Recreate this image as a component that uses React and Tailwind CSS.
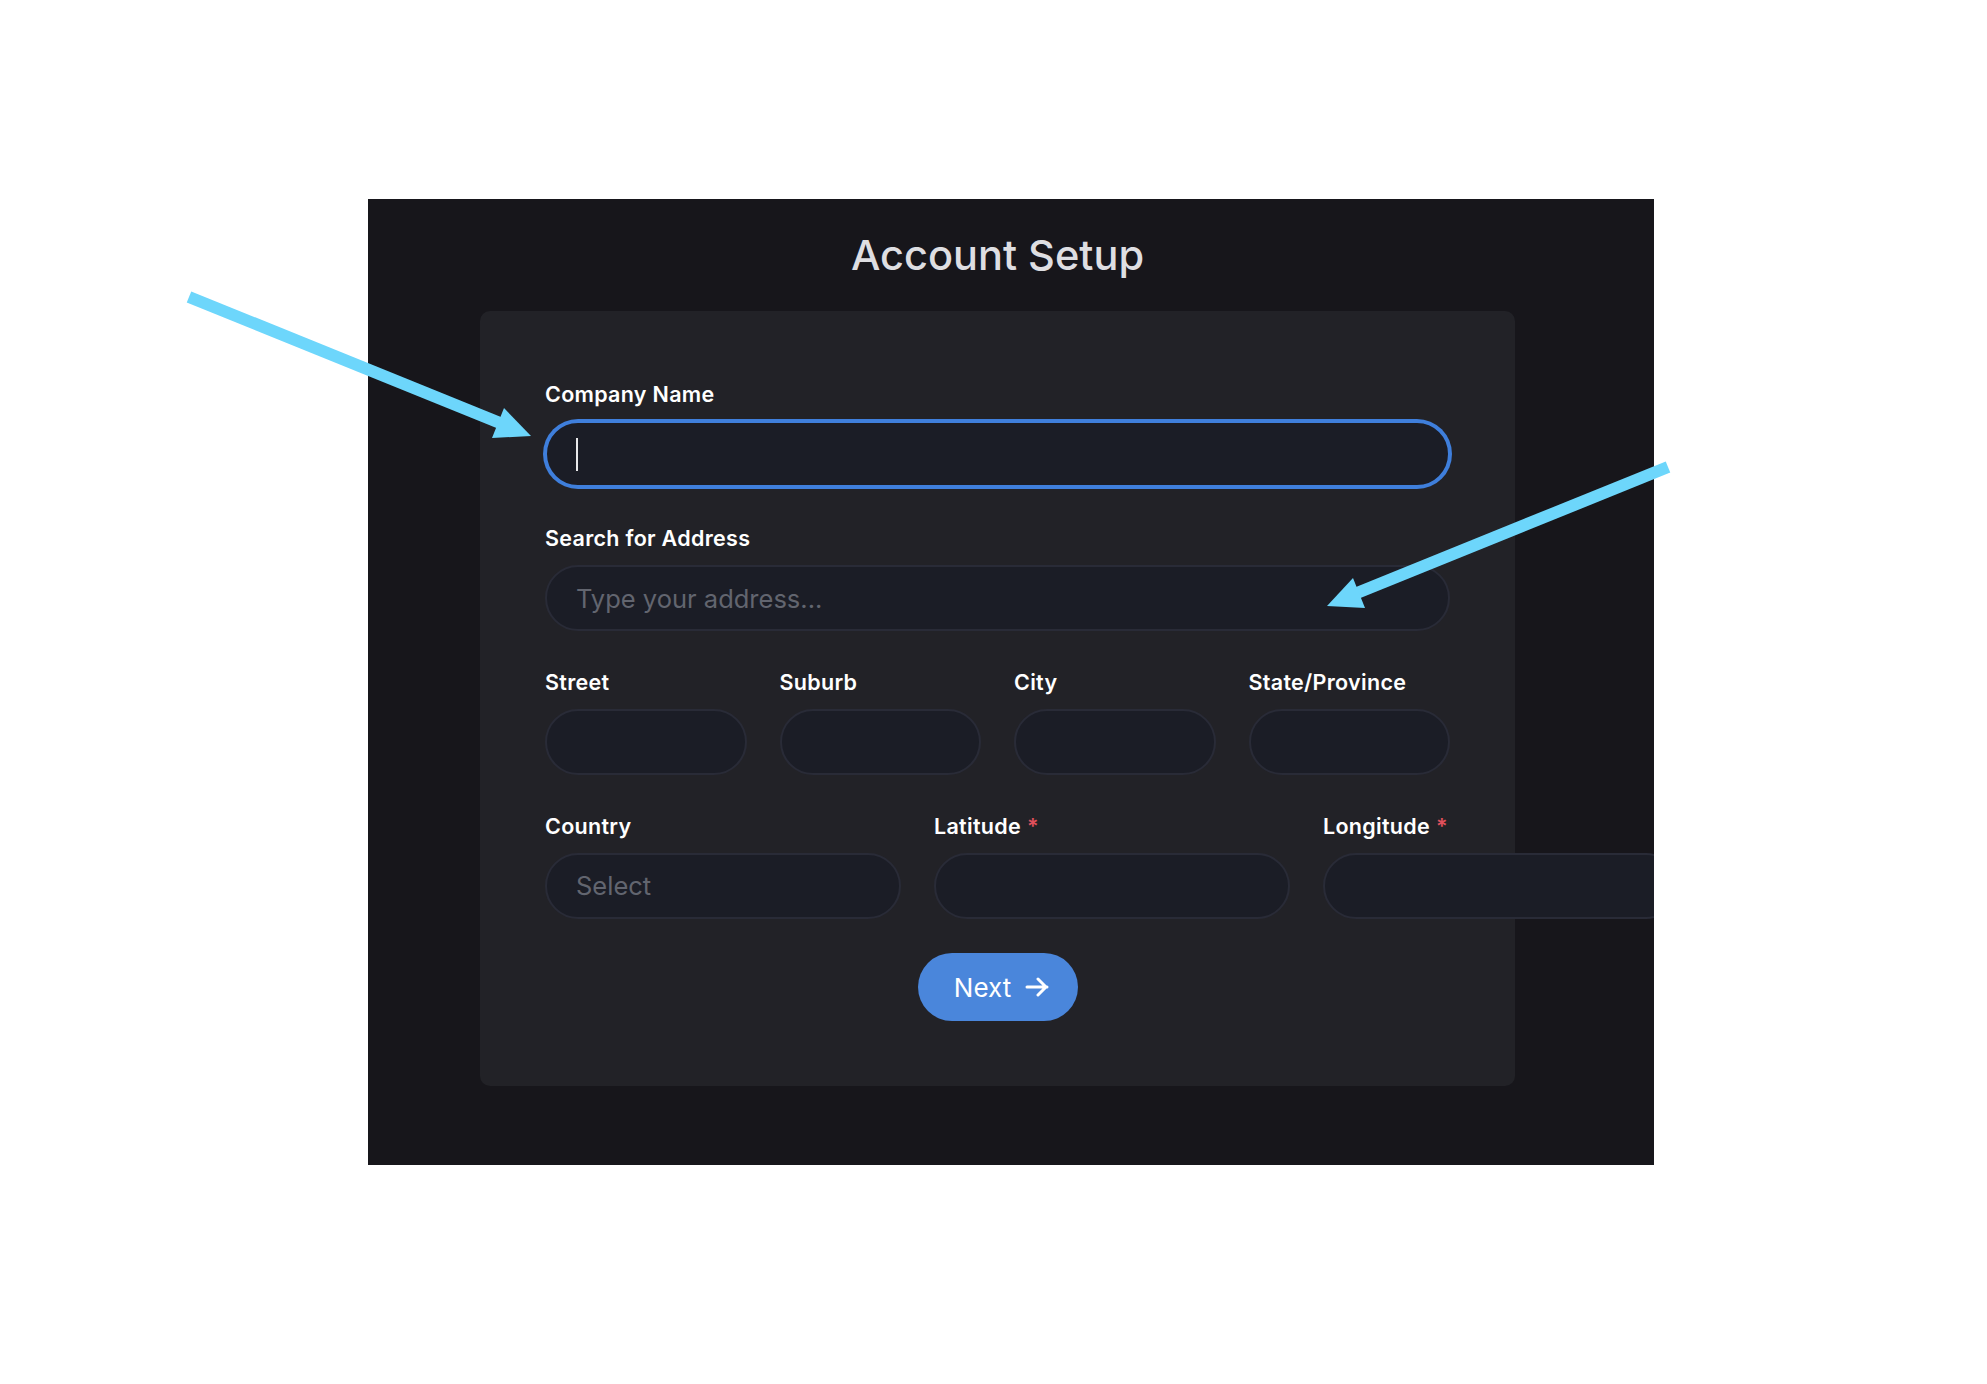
const inputBase =
  'h-[66px] w-full rounded-full border-2 border-[#292b37] bg-[#1b1d26] px-[29px] text-[25.5px] outline-none placeholder:text-[#62656f]'

function Field({ label, required, children }) {
  return (
    <label className="flex flex-col gap-[14px]">
      <span className="text-[21.5px] leading-[26px] font-semibold tracking-[0.3px] text-white">
        {label}
        {required && <span className="ml-1.5 text-[#e0505c]">*</span>}
      </span>
      {children}
    </label>
  )
}

function AnnotationArrows() {
  // callout arrows laid over the screenshot
  return (
    <svg
      className="pointer-events-none absolute inset-0"
      width="1987"
      height="1384"
      viewBox="0 0 1987 1384"
    >
      <g fill="#6dd6fb" stroke="#6dd6fb">
        <line x1="189" y1="297" x2="500" y2="423" strokeWidth="12" />
        <polygon points="531,436 504,408 492,438" strokeWidth="0" />
        <line x1="1668" y1="467" x2="1357" y2="593" strokeWidth="12" />
        <polygon points="1327,606 1353,578 1365,608" strokeWidth="0" />
      </g>
    </svg>
  )
}

export default function App() {
  return (
    <div className="relative h-[1384px] w-[1987px] overflow-hidden bg-white font-[Inter,sans-serif]">
      <div className="pl-[368px] pt-[199px]">
        <div className="h-[966px] w-[1286px] overflow-hidden bg-[#17161b] pl-[112px] pt-[36px]">
          <div className="w-[1035px]">
            <h1 className="text-center text-[41.5px] leading-[40px] font-medium text-[#dedee2]">
              Account Setup
            </h1>

            <div className="mt-[36px] rounded-[10px] bg-[#222227] px-[65px] pt-[70px] pb-[65px]">
              <div className="flex flex-col gap-[38px]">
                <Field label="Company Name">
                  <div className="flex h-[66px] w-full items-center rounded-full border-2 border-[#3f7fdc] bg-[#1b1d26] pl-[29px] ring-2 ring-[#3f7fdc]">
                    <span className="h-[33px] w-[2px] bg-[#e8e8ea]" />
                  </div>
                </Field>

                <Field label="Search for Address">
                  <input className={inputBase + ' text-white'} placeholder="Type your address..." />
                </Field>

                <div className="grid grid-cols-4 gap-x-[33px]">
                  <Field label="Street">
                    <input className={inputBase + ' text-white'} />
                  </Field>
                  <Field label="Suburb">
                    <input className={inputBase + ' text-white'} />
                  </Field>
                  <Field label="City">
                    <input className={inputBase + ' text-white'} />
                  </Field>
                  <Field label="State/Province">
                    <input className={inputBase + ' text-white'} />
                  </Field>
                </div>

                <div className="grid grid-cols-[356px_356px_356px] gap-x-[33px]">
                  <Field label="Country">
                    <select
                      defaultValue=""
                      className={inputBase + ' appearance-none text-[#62656f]'}
                    >
                      <option value="" disabled>
                        Select
                      </option>
                    </select>
                  </Field>
                  <Field label="Latitude" required>
                    <input className={inputBase + ' text-white'} />
                  </Field>
                  <Field label="Longitude" required>
                    <input className={inputBase + ' text-white'} />
                  </Field>
                </div>
              </div>

              <div className="mt-[34px] flex justify-center">
                <button className="flex h-[68px] w-[160px] items-center justify-center gap-[14px] rounded-full bg-[#4a86db] pl-[8px] text-[26px] text-white">
                  Next
                  <svg width="24" height="20" viewBox="0 0 24 20" fill="none">
                    <path
                      d="M2 10h20M13 2l8 8-8 8"
                      stroke="white"
                      strokeWidth="3"
                      strokeLinecap="round"
                      strokeLinejoin="round"
                    />
                  </svg>
                </button>
              </div>
            </div>
          </div>
        </div>
      </div>

      <AnnotationArrows />
    </div>
  )
}
